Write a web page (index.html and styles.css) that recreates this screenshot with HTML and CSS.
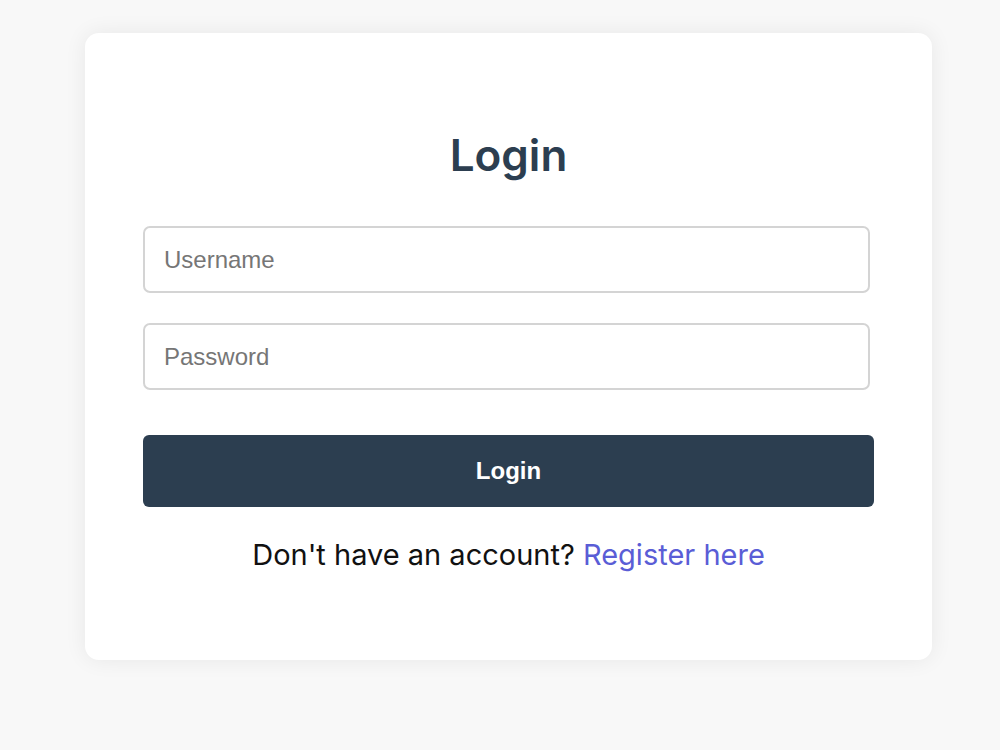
FILE: index.html
```html
<!DOCTYPE html>
<html lang="en">
<head>
  <meta charset="UTF-8">
  <meta name="viewport" content="width=device-width, initial-scale=1">
  <title>Login</title>
  <link rel="stylesheet" href="styles.css">
</head>
<body>

<div class="card">
  <h2>Login</h2>

  <form class="login-form" onsubmit="return false;">
    <input type="text" placeholder="Username">
    <input type="password" placeholder="Password">
    <button type="submit">Login</button>
  </form>

  <p class="register">Don't have an account? <a href="#">Register here</a></p>
</div>

</body>
</html>
```

FILE: styles.css
```css
* { margin: 0; padding: 0; box-sizing: border-box; }
body {
  font-family: Inter, "Liberation Sans", Arial, sans-serif;
  background: #f8f8f8;
  min-height: 100vh;
  padding: 33px 0 0 85px;
}
.card {
  background: #ffffff;
  width: 847px;
  height: 627px;
  padding: 96px 58px 0;
  border-radius: 14px;
  box-shadow: 0 0 22px rgba(0, 0, 0, 0.07);
}
h2 {
  text-align: center;
  font-size: 44px;
  font-weight: 600;
  line-height: 53px;
  color: #2c3e50;
  margin-bottom: 44px;
}
.login-form {
  display: flex;
  flex-direction: column;
}
input {
  width: 727px;
  height: 67px;
  padding: 0 19px;
  font-family: "Liberation Sans", Arial, sans-serif;
  font-size: 24px;
  color: #333;
  border: 2px solid #d4d4d4;
  border-radius: 7px;
  margin-bottom: 30px;
  outline: none;
}
input::placeholder {
  color: #767676;
}
button {
  height: 72px;
  margin-top: 15px;
  font-family: "Liberation Sans", Arial, sans-serif;
  font-size: 24px;
  font-weight: bold;
  color: white;
  background-color: #2c3e50;
  border: none;
  border-radius: 6px;
  cursor: pointer;
}
.register {
  margin-top: 30px;
  text-align: center;
  font-size: 29px;
  line-height: 35px;
  color: #111;
}
.register a {
  color: #5a5dd6;
  text-decoration: none;
}
```
